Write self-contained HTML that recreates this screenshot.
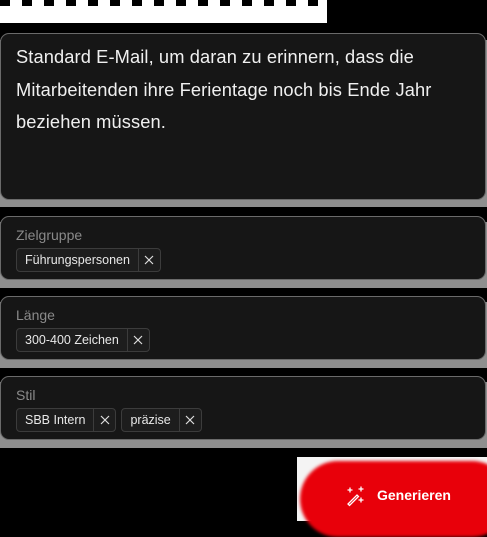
<!DOCTYPE html>
<html><head><style>
*{margin:0;padding:0;box-sizing:border-box}
body{width:487px;height:521px;background:#000;position:relative;overflow:hidden;font-family:"Liberation Sans",sans-serif}
.top{position:absolute;left:0;top:0;width:327px;height:23px;background:#fff}
.dash{position:absolute;top:0;height:6px}
.g{position:absolute;left:0;width:487px;background:#8f8f8f}
.c{position:absolute;left:0;width:486px;background:#161616;border:1px solid #6a6a6a;border-radius:9px}
.lab{position:absolute;left:15px;top:10px;font-size:14px;color:#8a8a8a}
.chips{position:absolute;left:15px;top:31px;display:flex;gap:5px}
.chip{height:24px;border:1px solid #3c3c3c;background:#1d1d1d;border-radius:4px;display:flex;align-items:center;font-size:12.5px;color:#e8e8e8}
.chip span{padding:0 8px}
.chip b{width:22px;height:22px;border-left:1px solid #3c3c3c;display:flex;align-items:center;justify-content:center}
.main{font-size:18.3px;line-height:32.5px;color:#f0f0f0;position:absolute;width:460px;letter-spacing:0.1px}
</style></head><body>
<div class="top"></div>
<div class="dash" style="left:0;width:327px;background:repeating-linear-gradient(90deg,#000 0 10px,#fff 10px 22px)"></div>
<div class="g" style="top:40px;height:167px"></div>
<div class="c" style="top:33px;height:167px"><div class="main" style="left:15px;top:7px">Standard E-Mail, um daran zu erinnern, dass die Mitarbeitenden ihre Ferientage noch bis Ende Jahr beziehen müssen.</div></div>
<div class="g" style="top:222px;height:66px"></div>
<div class="c" style="top:216px;height:64px"><div class="lab">Zielgruppe</div><div class="chips"><div class="chip"><span>Führungspersonen</span><b><svg width="10" height="10" viewBox="0 0 10 10" stroke="#ddd" stroke-width="1.2"><path d="M1 1l8 8M9 1l-8 8"/></svg></b></div></div></div>
<div class="g" style="top:302px;height:66px"></div>
<div class="c" style="top:296px;height:64px"><div class="lab">Länge</div><div class="chips"><div class="chip"><span>300-400 Zeichen</span><b><svg width="10" height="10" viewBox="0 0 10 10" stroke="#ddd" stroke-width="1.2"><path d="M1 1l8 8M9 1l-8 8"/></svg></b></div></div></div>
<div class="g" style="top:382px;height:66px"></div>
<div class="c" style="top:376px;height:64px"><div class="lab">Stil</div><div class="chips"><div class="chip"><span>SBB Intern</span><b><svg width="10" height="10" viewBox="0 0 10 10" stroke="#ddd" stroke-width="1.2"><path d="M1 1l8 8M9 1l-8 8"/></svg></b></div><div class="chip"><span>präzise</span><b><svg width="10" height="10" viewBox="0 0 10 10" stroke="#ddd" stroke-width="1.2"><path d="M1 1l8 8M9 1l-8 8"/></svg></b></div></div></div>
<div style="position:absolute;left:297px;top:457px;width:190px;height:64px;background:#f4f4f4"></div>
<div style="position:absolute;left:300px;top:461px;width:210px;height:76px;background:#e8000a;border-radius:38px;filter:blur(1.5px)"></div>
<svg style="position:absolute;left:345px;top:485px" width="22" height="22" viewBox="0 0 22 22" fill="none" stroke="#fff" stroke-width="1.3" stroke-linecap="round"><path d="M3 19l9-9 1.5 1.5-9 9z"/><path d="M5 3v4M3 5h4M16 2v4M14 4h4M16 13v4M14 15h4"/></svg>
<div style="position:absolute;left:377px;top:487px;font-size:14px;font-weight:bold;color:#fff">Generieren</div>
</body></html>
